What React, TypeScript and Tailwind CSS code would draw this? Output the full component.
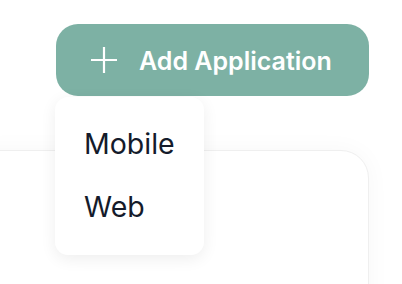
import { useState } from "react";

function PlusIcon() {
  return (
    <svg width="28" height="28" viewBox="0 0 28 28" fill="none" stroke="currentColor" strokeWidth="2.2" strokeLinecap="butt">
      <path d="M14 1v26M1 14h26" />
    </svg>
  );
}

export default function App() {
  const [open] = useState(true);

  return (
    <div className="relative w-[402px] h-[284px] overflow-hidden bg-white" style={{ fontFamily: "Inter, 'Noto Sans', sans-serif" }}>
      {/* Header action */}
      <div className="flex justify-end pt-[24px] pr-[33px]">
        <button className="flex items-center w-[313px] h-[72px] pl-[34px] gap-[21px] rounded-[22px] bg-[#7db1a4] text-white">
          <PlusIcon />
          <span className="text-[25px] font-semibold leading-[30px] translate-y-[1px]">Add Application</span>
        </button>
      </div>

      {/* Card behind */}
      <div className="mt-[54px] ml-[-40px] w-[409px] h-[200px] rounded-[28px] bg-white border border-[#efefef] shadow-[0_0_24px_rgba(0,0,0,0.035)]" />

      {/* Dropdown menu */}
      {open && (
        <div className="absolute left-[55px] top-[97px] w-[149px] h-[158px] rounded-[13px] bg-white shadow-[0_4px_16px_rgba(0,0,0,0.07)] flex flex-col pt-[29px] pl-[29px] gap-[27px] text-[#141b2b]">
          <div className="text-[28.5px] leading-[36px]">Mobile</div>
          <div className="text-[28.5px] leading-[36px]">Web</div>
        </div>
      )}
    </div>
  );
}
